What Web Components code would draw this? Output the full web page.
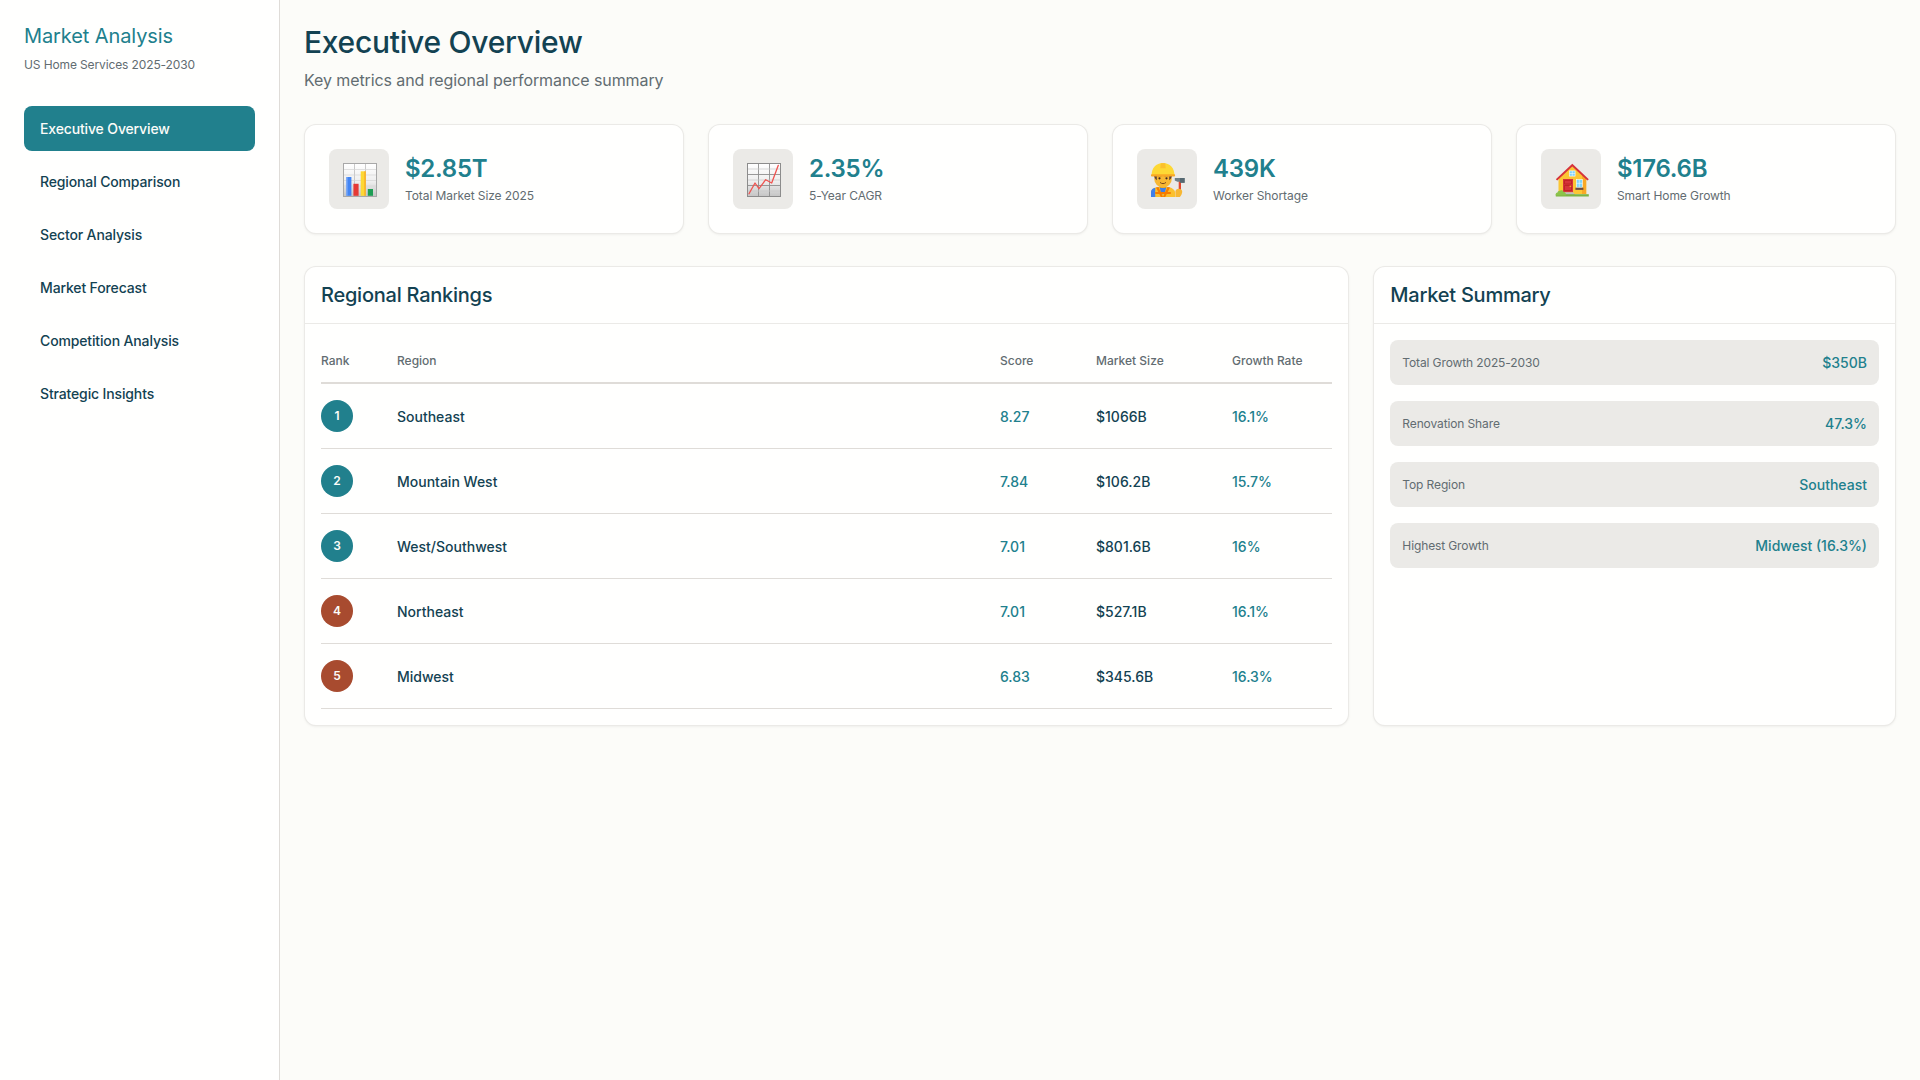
<!DOCTYPE html>
<html lang="en">
<head>
<meta charset="utf-8">
<title>Market Analysis</title>
<style>
html,body{margin:0;padding:0;height:100%;background:#fcfcf9;}
body{font-family:Inter,"Noto Sans",sans-serif;color:#134252;font-size:14px;line-height:1.5;}
</style>
</head>
<body>
<ma-app>
  <ma-sidebar slot="sidebar" heading="Market Analysis" sub="US Home Services 2025-2030">
    <ma-nav-item active>Executive Overview</ma-nav-item>
    <ma-nav-item>Regional Comparison</ma-nav-item>
    <ma-nav-item>Sector Analysis</ma-nav-item>
    <ma-nav-item>Market Forecast</ma-nav-item>
    <ma-nav-item>Competition Analysis</ma-nav-item>
    <ma-nav-item>Strategic Insights</ma-nav-item>
  </ma-sidebar>
  <ma-page-header heading="Executive Overview" sub="Key metrics and regional performance summary"></ma-page-header>
  <ma-metrics>
    <ma-metric icon="bars" value="$2.85T" label="Total Market Size 2025"></ma-metric>
    <ma-metric icon="line" value="2.35%" label="5-Year CAGR"></ma-metric>
    <ma-metric icon="worker" value="439K" label="Worker Shortage"></ma-metric>
    <ma-metric icon="house" value="$176.6B" label="Smart Home Growth"></ma-metric>
  </ma-metrics>
  <ma-columns>
    <ma-panel heading="Regional Rankings">
      <ma-rank-head></ma-rank-head>
      <ma-rank-row rank="1" region="Southeast" score="8.27" size="$1066B" growth="16.1%"></ma-rank-row>
      <ma-rank-row rank="2" region="Mountain West" score="7.84" size="$106.2B" growth="15.7%"></ma-rank-row>
      <ma-rank-row rank="3" region="West/Southwest" score="7.01" size="$801.6B" growth="16%"></ma-rank-row>
      <ma-rank-row rank="4" tone="warn" region="Northeast" score="7.01" size="$527.1B" growth="16.1%"></ma-rank-row>
      <ma-rank-row rank="5" tone="warn" region="Midwest" score="6.83" size="$345.6B" growth="16.3%"></ma-rank-row>
    </ma-panel>
    <ma-panel heading="Market Summary" stack>
      <ma-summary label="Total Growth 2025-2030" value="$350B"></ma-summary>
      <ma-summary label="Renovation Share" value="47.3%"></ma-summary>
      <ma-summary label="Top Region" value="Southeast"></ma-summary>
      <ma-summary label="Highest Growth" value="Midwest (16.3%)"></ma-summary>
    </ma-panel>
  </ma-columns>
</ma-app>
<script>
const esc = s => String(s ?? '');
class Base extends HTMLElement {
  connectedCallback(){
    if(!this.shadowRoot){
      this.attachShadow({mode:'open'}).innerHTML = this.render();
    }
  }
  a(n){return esc(this.getAttribute(n));}
}
function def(name, render){
  customElements.define(name, class extends Base { render(){return render(this);} });
}
const gridBg = (id, edge) => `<defs><linearGradient id="${id}" x1="0" y1="0" x2="0" y2="1"><stop offset="0" stop-color="#ffffff"/><stop offset=".55" stop-color="#eeeeee"/><stop offset="1" stop-color="#c4c4c4"/></linearGradient></defs>
  <rect x=".5" y=".5" width="33" height="33" fill="url(#${id})" stroke="${edge}" stroke-width="1"/>`;
const ICONS = {
  bars: `<svg viewBox="0 0 34 34" width="34" height="34">${gridBg('gb','#a8a8a8')}
    <path d="M11.5 1v32M22.500 1v32" stroke="#bdbdbd" stroke-width=".8"/>
    <path d="M1 6.500h32M1 12h32M1 17.500h32M1 23h32M1 28.500h32" stroke="#d4d4d4" stroke-width=".7"/>
    <rect x="3.400" y="14" width="5" height="18.800" fill="#4285f4"/><rect x="3.400" y="14" width="1.200" height="18.800" fill="#7baaf7"/>
    <rect x="10.400" y="20.800" width="5.200" height="12" fill="#e53935"/>
    <rect x="17.700" y="8.300" width="5" height="24.500" fill="#fdd835"/><rect x="21.400" y="8.300" width="1.300" height="24.500" fill="#f9a825"/>
    <rect x="24.800" y="26" width="5.200" height="6.800" fill="#1e9e54"/>
  </svg>`,
  line: `<svg viewBox="0 0 34 34" width="34" height="34">${gridBg('gl','#8c8c8c')}
    <path d="M11.500 1v32M22.500 1v32M1 11.500h32M1 22.500h32" stroke="#8f8f8f" stroke-width=".9"/>
    <path d="M1 6h32M1 17h32M1 28h32" stroke="#c9c9c9" stroke-width=".7"/>
    <polyline points="2,30.700 8,20 12,25.700 18.700,16.700 24.700,20 31.300,2.300" fill="none" stroke="#ef5350" stroke-width="1.300" stroke-linejoin="round" stroke-linecap="round"/>
  </svg>`,
  worker: `<svg viewBox="0 0 34 34" width="34" height="34">
    <path d="M0 34v-4.500C0 26 4 24.600 7 24h10c3 .6 7 2 7 5.500V34z" fill="#fbc02d"/>
    <path d="M0 34v-5c0-1.500.8-2.700 2-3.500l2.200-.8V34z" fill="#3f7fe8"/>
    <path d="M8.700 24h6.600l-1.500 6-2 1.500-2-1.500z" fill="#3f7fe8"/>
    <path d="M5 24.500 9.800 34h2.200L7.500 24zM19 24.500 14.200 34H12l4.500-10z" fill="#f57c00"/>
    <path d="M4.200 29h15.600v2H4.200z" fill="#f57c00"/>
    <rect x="9.300" y="20.500" width="5.400" height="4.500" fill="#e8a21a"/>
    <ellipse cx="12" cy="15.800" rx="8.800" ry="8.800" fill="#f7b733"/>
    <path d="M2.800 11h3v6.200c-1.600-.9-2.800-3-3-6.200zM21.200 11h-3v6.200c1.600-.9 2.800-3 3-6.200z" fill="#5d4037"/>
    <path d="M6.800 13.200c1-.7 2.500-.7 3.400 0M13.800 13.200c.9-.7 2.400-.7 3.400 0" fill="none" stroke="#5d4037" stroke-width=".8"/>
    <circle cx="8.500" cy="15.300" r="1.100" fill="#3e2723"/><circle cx="15.500" cy="15.300" r="1.100" fill="#3e2723"/>
    <path d="M9.300 19.700c1.500 1.300 3.900 1.300 5.400 0" fill="none" stroke="#6d3d1a" stroke-width=".9" stroke-linecap="round"/>
    <path d="M.6 12.800C.4 5 5 0 12 0s11.600 5 11.400 12.800z" fill="#fdd835"/>
    <path d="M9.800 .2h4.400l.5 5h-5.400z" fill="#fbc02d"/>
    <path d="M.6 11.200h22.800c.9 0 .9 2.200 0 2.200H.6c-.9 0-.9-2.200 0-2.200z" fill="#f9a825"/>
    <rect x="27.700" y="18" width="2.300" height="12" fill="#e2492f"/>
    <path d="M23.800 15h9.800v4.800h-3l-1-1h-3.200l-2.600-1.400z" fill="#6f7f87"/>
    <rect x="29" y="15" width="4.600" height="4.800" fill="#556871"/>
    <path d="M24.400 34v-5.300c0-1.800 1.500-2.900 3.400-2.900s3.400 1.200 3.400 2.900c0 1.700-1 3.700-2.300 5.300z" fill="#f7b733"/>
  </svg>`,
  house: `<svg viewBox="0 0 34 34" width="34" height="34">
    <path d="M3.500 15 17.300 3 31.200 15v16H3.500z" fill="#fcc634"/>
    <path d="M27 11l4.200 4v16H27z" fill="#f9a825"/>
    <path d="M.8 16.200 17.300 .8 33.800 16.200l-1.400 1.400L17.300 3.600 2.200 17.600z" fill="#d6333a"/>
    <rect x="14.500" y="7.900" width="5.600" height="5.200" fill="#81d4fa" stroke="#fff" stroke-width=".6"/>
    <path d="M17.300 8v5M14.500 10.500h5.600" stroke="#fff" stroke-width=".5"/>
    <rect x="8" y="16" width="10" height="13.300" fill="#d6333a"/>
    <path d="M9.500 17.500h7v3.500h-7zM9.500 22.500h7v5h-7z" fill="none" stroke="#b71c1c" stroke-width=".7"/>
    <rect x="14.600" y="22.700" width="1.600" height="1" fill="#ffca28"/>
    <rect x="21.400" y="16.600" width="5.900" height="8" fill="#81d4fa" stroke="#fff" stroke-width=".6"/>
    <path d="M24.300 16.600v8M21.400 20.300h5.900" stroke="#fff" stroke-width=".5"/>
    <rect x="20.400" y="24.700" width="8" height="2.200" fill="#6d4c41"/>
    <path d="M8 29.300h10l2.500 2.700H7z" fill="#bdbdbd"/>
    <rect x=".8" y="31.200" width="33" height="2.300" fill="#7cb342"/>
    <path d="M.8 32.500c-.5-2 .6-3 1.700-3 .2-1.300 1.500-2.100 2.700-1.700 1-.9 2.700-.4 3.100.9 1.500-.1 2.800 1.100 2.700 3.800z" fill="#8bc34a"/>
  </svg>`
};
def('ma-app', () => `<style>
  :host{display:flex;min-height:100vh;box-sizing:border-box;background:#fcfcf9;}
  main{flex:1;min-width:0;padding:24px;}
</style><slot name="sidebar"></slot><main><slot></slot></main>`);
def('ma-sidebar', el => `<style>
  :host{display:block;flex:0 0 280px;width:280px;box-sizing:border-box;background:#fffffe;border-right:1px solid rgba(94,82,64,.2);padding:24px;}
  h2{margin:0;font-size:20px;line-height:24px;font-weight:400;color:#21808d;letter-spacing:-.005em;}
  p{margin:8px 0 0;font-size:12px;line-height:18px;color:#626c71;letter-spacing:-.01em;}
  nav{display:flex;flex-direction:column;gap:8px;margin-top:32px;}
</style><h2>${el.a('heading')}</h2><p>${el.a('sub')}</p><nav><slot></slot></nav>`);
def('ma-nav-item', el => `<style>
  :host{display:block;padding:12px 16px;border-radius:8px;font-size:14px;line-height:21px;font-weight:500;letter-spacing:-.01em;color:#134252;}
  :host([active]){background:#21808d;color:#fcfcf9;}
</style><slot></slot>`);
def('ma-page-header', el => `<style>
  :host{display:block;margin-bottom:32px;}
  h1{margin:0;font-size:30px;line-height:36px;font-weight:500;color:#134252;letter-spacing:-.009em;}
  p{margin:8px 0 0;font-size:16px;line-height:24px;color:#626c71;letter-spacing:-.006em;}
</style><h1>${el.a('heading')}</h1><p>${el.a('sub')}</p>`);
def('ma-metrics', () => `<style>
  :host{display:grid;grid-template-columns:repeat(4,1fr);gap:24px;margin-bottom:32px;}
</style><slot></slot>`);
def('ma-metric', el => `<style>
  :host{display:flex;align-items:center;gap:16px;padding:24px;background:#fffffe;border:1px solid rgba(94,82,64,.12);border-radius:12px;box-shadow:0 1px 3px rgba(0,0,0,.04),0 1px 2px rgba(0,0,0,.02);}
  .ic{flex:0 0 60px;width:60px;height:60px;border-radius:8px;background:rgba(94,82,64,.12);display:flex;align-items:center;justify-content:center;}
  .ic svg{display:block;margin:2px 0 0 2px;}
  .v{font-size:24px;line-height:29px;font-weight:600;letter-spacing:-.01em;color:#21808d;margin-bottom:4px;}
  .l{font-size:12px;line-height:18px;color:#626c71;letter-spacing:-.007em;}
</style><div class="ic">${ICONS[el.a('icon')]}</div><div><div class="v">${el.a('value')}</div><div class="l">${el.a('label')}</div></div>`);
def('ma-columns', () => `<style>
  :host{display:grid;grid-template-columns:2fr 1fr;gap:24px;}
</style><slot></slot>`);
def('ma-panel', el => `<style>
  :host{display:flex;flex-direction:column;background:#fffffe;border:1px solid rgba(94,82,64,.12);border-radius:12px;box-shadow:0 1px 3px rgba(0,0,0,.04),0 1px 2px rgba(0,0,0,.02);overflow:hidden;}
  header{padding:16px;border-bottom:1px solid rgba(94,82,64,.12);}
  h3{margin:0;font-size:20px;line-height:24px;font-weight:500;color:#134252;letter-spacing:-.012em;}
  .body{padding:16px;display:flex;flex-direction:column;}
  :host([stack]) .body{gap:16px;}
</style><header><h3>${el.a('heading')}</h3></header><div class="body"><slot></slot></div>`);
const cols = 'grid-template-columns:76px 603px 96px 136px 1fr;';
def('ma-rank-head', () => `<style>
  :host{display:grid;${cols}align-items:center;height:42px;box-sizing:content-box;border-bottom:2px solid rgba(94,82,64,.2);font-size:12px;line-height:18px;font-weight:500;color:#626c71;}
</style><span>Rank</span><span>Region</span><span>Score</span><span>Market Size</span><span>Growth Rate</span>`);
def('ma-rank-row', el => `<style>
  :host{display:grid;${cols}align-items:center;padding:16px 0;border-bottom:1px solid rgba(94,82,64,.2);font-size:14px;line-height:21px;font-weight:500;color:#134252;}
  .b{width:32px;height:32px;border-radius:50%;display:flex;align-items:center;justify-content:center;background:#21808d;color:#fcfcf9;font-size:12px;font-weight:600;padding-bottom:1px;box-sizing:border-box;}
  :host([tone=warn]) .b{background:#a84b2f;}
  .t{color:#21808d;}
</style><div class="b">${el.a('rank')}</div><div class="r">${el.a('region')}</div><div class="t">${el.a('score')}</div><div>${el.a('size')}</div><div class="t">${el.a('growth')}</div>`);
def('ma-summary', el => `<style>
  :host{display:flex;justify-content:space-between;align-items:center;padding:12px;background:rgba(94,82,64,.12);border-radius:8px;}
  .l{font-size:12px;line-height:18px;color:#626c71;letter-spacing:-.01em;}
  .v{font-size:14px;line-height:21px;font-weight:500;color:#21808d;}
</style><span class="l">${el.a('label')}</span><span class="v">${el.a('value')}</span>`);
</script>
</body>
</html>
